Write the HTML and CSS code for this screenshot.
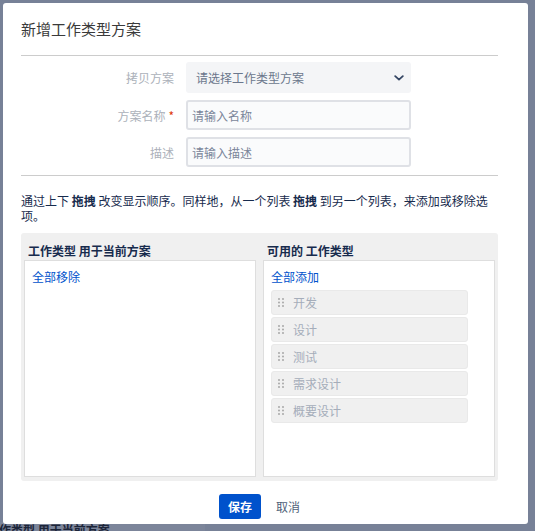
FILE: index.html
```html
<!DOCTYPE html>
<html lang="zh-CN">
<head>
<meta charset="utf-8">
<title>新增工作类型方案</title>
<link rel="stylesheet" href="styles.css">
</head>
<body>
<div class="page">
  <div class="page-strip"><span class="page-text">工作类型 用于当前方案</span></div>
</div>
<div class="modal" role="dialog">
  <h2 class="modal-title">新增工作类型方案</h2>
  <div class="form">
    <div class="row">
      <label class="label">拷贝方案</label>
      <div class="select">
        <span>请选择工作类型方案</span>
        <svg class="chev" width="10" height="6" viewBox="0 0 10 6"><path d="M1.2 1.2 L5 4.6 L8.8 1.2" fill="none" stroke="#344563" stroke-width="1.8" stroke-linecap="round" stroke-linejoin="round"/></svg>
      </div>
    </div>
    <div class="row">
      <label class="label">方案名称<span class="req">*</span></label>
      <input class="input" type="text" placeholder="请输入名称">
    </div>
    <div class="row">
      <label class="label">描述</label>
      <input class="input" type="text" placeholder="请输入描述">
    </div>
  </div>
  <p class="hint">通过上下 <strong>拖拽</strong> 改变显示顺序。同样地，从一个列表 <strong>拖拽</strong> 到另一个列表，来添加或移除选项。</p>
  <div class="panel">
    <div class="col">
      <div class="col-head">工作类型 用于当前方案</div>
      <div class="box">
        <a class="link">全部移除</a>
      </div>
    </div>
    <div class="col">
      <div class="col-head">可用的 工作类型</div>
      <div class="box">
        <a class="link">全部添加</a>
        <ul class="items">
          <li class="item"><svg class="grip" width="6" height="9" viewBox="0 0 6 9"><circle cx="1" cy="1" r="0.9"/><circle cx="5" cy="1" r="0.9"/><circle cx="1" cy="4.5" r="0.9"/><circle cx="5" cy="4.5" r="0.9"/><circle cx="1" cy="8" r="0.9"/><circle cx="5" cy="8" r="0.9"/></svg><span>开发</span></li>
          <li class="item"><svg class="grip" width="6" height="9" viewBox="0 0 6 9"><circle cx="1" cy="1" r="0.9"/><circle cx="5" cy="1" r="0.9"/><circle cx="1" cy="4.5" r="0.9"/><circle cx="5" cy="4.5" r="0.9"/><circle cx="1" cy="8" r="0.9"/><circle cx="5" cy="8" r="0.9"/></svg><span>设计</span></li>
          <li class="item"><svg class="grip" width="6" height="9" viewBox="0 0 6 9"><circle cx="1" cy="1" r="0.9"/><circle cx="5" cy="1" r="0.9"/><circle cx="1" cy="4.5" r="0.9"/><circle cx="5" cy="4.5" r="0.9"/><circle cx="1" cy="8" r="0.9"/><circle cx="5" cy="8" r="0.9"/></svg><span>测试</span></li>
          <li class="item"><svg class="grip" width="6" height="9" viewBox="0 0 6 9"><circle cx="1" cy="1" r="0.9"/><circle cx="5" cy="1" r="0.9"/><circle cx="1" cy="4.5" r="0.9"/><circle cx="5" cy="4.5" r="0.9"/><circle cx="1" cy="8" r="0.9"/><circle cx="5" cy="8" r="0.9"/></svg><span>需求设计</span></li>
          <li class="item"><svg class="grip" width="6" height="9" viewBox="0 0 6 9"><circle cx="1" cy="1" r="0.9"/><circle cx="5" cy="1" r="0.9"/><circle cx="1" cy="4.5" r="0.9"/><circle cx="5" cy="4.5" r="0.9"/><circle cx="1" cy="8" r="0.9"/><circle cx="5" cy="8" r="0.9"/></svg><span>概要设计</span></li>
        </ul>
      </div>
    </div>
  </div>
  <div class="footer">
    <button class="btn-primary" type="button">保存</button>
    <button class="btn-link" type="button">取消</button>
  </div>
</div>
</body>
</html>
```
FILE: styles.css
```css
html, body {
  margin: 0;
  padding: 0;
}
body {
  width: 535px;
  height: 531px;
  overflow: hidden;
  position: relative;
  background: #778197;
  font-family: "Noto Sans CJK SC", "Noto Sans", sans-serif;
}
.page {
  padding-top: 522px;
}
.page-strip {
  width: 205px;
  height: 9px;
  background: #7c859a;
  overflow: hidden;
}
.page-text {
  display: block;
  margin-left: -13px;
  font-size: 12px;
  font-weight: 700;
  line-height: 16px;
  color: #1c2539;
  white-space: nowrap;
}
.modal {
  position: absolute;
  left: 3px;
  top: 3px;
  width: 525px;
  height: 521px;
  box-sizing: border-box;
  background: #fff;
  border-radius: 3px;
  padding: 16px 30px 0 18px;
  display: flex;
  flex-direction: column;
}
.modal-title {
  margin: 0;
  font-size: 15px;
  font-weight: 400;
  line-height: 20px;
  color: #3a3a3a;
  padding-bottom: 16px;
  border-bottom: 1px solid #ccc;
}
.form {
  display: flex;
  flex-direction: column;
  gap: 7px;
  padding: 6px 0 8px;
  border-bottom: 1px solid #ccc;
}
.row {
  display: flex;
  align-items: center;
  gap: 12px;
}
.label {
  width: 153px;
  text-align: right;
  font-size: 12px;
  color: #acb1ba;
}
.req {
  color: #de350b;
  margin-left: 3px;
}
.select {
  width: 225px;
  height: 31px;
  box-sizing: border-box;
  background: #f4f5f7;
  border-radius: 3px;
  display: flex;
  align-items: center;
  justify-content: space-between;
  padding: 0 7px 0 10px;
  font-size: 12px;
  color: #6b778c;
}
.input {
  width: 225px;
  height: 30px;
  box-sizing: border-box;
  border: 2px solid #dfe1e6;
  background: #fafbfc;
  border-radius: 3px;
  padding: 0 4px;
  margin: 0;
  font-family: inherit;
  font-size: 12px;
  color: #172b4d;
  outline: none;
}
.input::placeholder {
  color: #7a869a;
  opacity: 1;
}
.hint {
  margin: 17px 0 0;
  font-size: 12px;
  line-height: 15px;
  color: #172b4d;
}
.hint strong {
  font-weight: 600;
}
.panel {
  margin-top: 10px;
  background: #f0f0f0;
  border-radius: 3px;
  padding: 0 3px 4px;
  display: grid;
  grid-template-columns: 1fr 1fr;
  column-gap: 7px;
}
.col-head {
  padding: 10px 4px 1px;
  font-size: 12px;
  font-weight: 700;
  line-height: 16px;
  color: #172b4d;
}
.box {
  height: 217px;
  box-sizing: border-box;
  background: #fff;
  border: 1px solid #dedede;
  padding: 7px 7px;
}
.link {
  display: block;
  font-size: 12px;
  line-height: 18px;
  color: #0052cc;
  cursor: pointer;
}
.items {
  list-style: none;
  margin: 4px 0 0;
  padding: 0;
  display: flex;
  flex-direction: column;
  gap: 2px;
}
.item {
  width: 197px;
  height: 25px;
  box-sizing: border-box;
  background: #f0f0f0;
  border: 1px solid #e9e9e9;
  border-radius: 3px;
  display: flex;
  align-items: center;
  padding-left: 6px;
  gap: 9px;
  font-size: 12px;
  color: #a5adba;
}
.grip {
  fill: #a0a0a0;
  flex: none;
}
.footer {
  margin-top: 13px;
  display: flex;
  justify-content: center;
  align-items: center;
  gap: 15px;
}
.btn-primary {
  height: 25px;
  padding: 0 9px;
  background: #0052cc;
  color: #fff;
  font-family: inherit;
  font-weight: 600;
  font-size: 12px;
  border: none;
  border-radius: 3px;
}
.btn-link {
  background: none;
  border: none;
  padding: 0;
  font-family: inherit;
  font-size: 12px;
  color: #505f79;
}
```
